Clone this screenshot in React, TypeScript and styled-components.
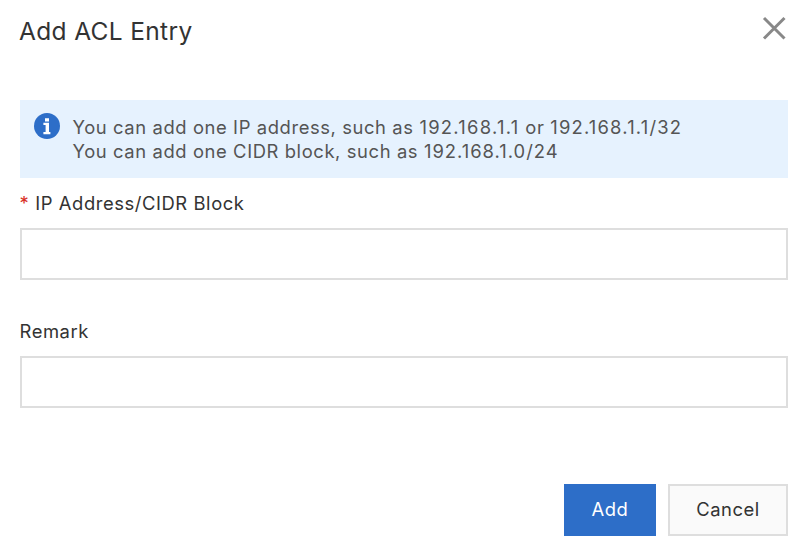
import React from "react";
import styled, { createGlobalStyle } from "styled-components";

const GlobalStyle = createGlobalStyle`
  * { box-sizing: border-box; }
  body { margin: 0; background: #fff; }
`;

const Dialog = styled.section`
  width: 812px;
  height: 554px;
  padding: 0 24px 18px 20px;
  display: flex;
  flex-direction: column;
  font-family: Inter, sans-serif;
  font-size: 18.4px;
  font-weight: 370;
  letter-spacing: 0.57px;
  color: #333;
  background: #fff;
`;

const Header = styled.header`
  display: flex;
  justify-content: space-between;
  height: 100px;
  flex: none;
`;

const Title = styled.h2`
  margin: 15px 0 0 -1px;
  font-size: 24.5px;
  line-height: 32px;
  font-weight: 370;
  letter-spacing: 0.34px;
`;

const CloseButton = styled.button`
  width: 24px;
  height: 24px;
  margin: 16px 2px 0 0;
  padding: 0;
  border: 0;
  background: none;
  svg { display: block; }
`;

const Notice = styled.div`
  display: flex;
  height: 78px;
  flex: none;
  padding: 13px 14px 0;
  gap: 13px;
  background: #e6f2fe;
  color: #555;
  line-height: 24px;
  svg { flex: none; }
`;

const NoticeText = styled.div`
  padding-top: 2px;
  margin-left: -0.5px;
  letter-spacing: 0.6px;
  white-space: nowrap;
`;

const Address = styled.span<{ $spacing: number }>`
  letter-spacing: ${(p) => p.$spacing}px;
`;

const Field = styled.div`
  display: flex;
  flex-direction: column;
  height: 128px;
  flex: none;
`;

const Label = styled.label`
  height: 50px;
  padding-top: 13px;
  line-height: 24px;
  margin-left: -0.5px;
`;

const Required = styled.span`
  color: #d93026;
  margin-right: 6px;
`;

const Input = styled.input`
  width: 100%;
  height: 52px;
  border: 2px solid #dedede;
  padding: 0 16px;
  font: inherit;
  outline: none;
`;

const Footer = styled.footer`
  display: flex;
  justify-content: flex-end;
  gap: 12px;
  margin-top: auto;
`;

const Button = styled.button<{ $primary?: boolean }>`
  width: ${(p) => (p.$primary ? 92 : 120)}px;
  height: 52px;
  padding: 0 0 2px;
  border: 2px solid ${(p) => (p.$primary ? "#2d6ec8" : "#dedede")};
  background: ${(p) => (p.$primary ? "#2d6ec8" : "#fafafa")};
  color: ${(p) => (p.$primary ? "#fff" : "#333")};
  font: inherit;
  letter-spacing: inherit;
`;

export default function App() {
  return (
    <>
      <GlobalStyle />
      <Dialog role="dialog" aria-labelledby="title">
        <Header>
          <Title id="title">Add ACL Entry</Title>
          <CloseButton aria-label="Close">
            <svg width="24" height="24" viewBox="0 0 24 24" stroke="#888" strokeWidth="3">
              <path d="M2 2 22.5 22.5M22.5 2 2 22.5" />
            </svg>
          </CloseButton>
        </Header>
        <Notice>
          <svg width="26" height="26" viewBox="0 0 26 26">
            <circle cx="13" cy="13" r="13" fill="#2d6ec8" />
            <path d="M11 5.2h4v3.3h-4zM9.4 9.8H15v9.2h1.4v2.3H9.4V19h2.2v-7H9.4z" fill="#fff" />
          </svg>
          <NoticeText>
            You can add one IP address, such as <Address $spacing={1.28}>192.168.1.1</Address> or{" "}
            <Address $spacing={1.2}>192.168.1.1/32</Address>
            <br />
            You can add one CIDR block, such as <Address $spacing={1}>192.168.1.0/24</Address>
          </NoticeText>
        </Notice>
        <Field>
          <Label htmlFor="ip"><Required>*</Required>IP Address/CIDR Block</Label>
          <Input id="ip" />
        </Field>
        <Field>
          <Label htmlFor="remark">Remark</Label>
          <Input id="remark" />
        </Field>
        <Footer>
          <Button $primary>Add</Button>
          <Button>Cancel</Button>
        </Footer>
      </Dialog>
    </>
  );
}
